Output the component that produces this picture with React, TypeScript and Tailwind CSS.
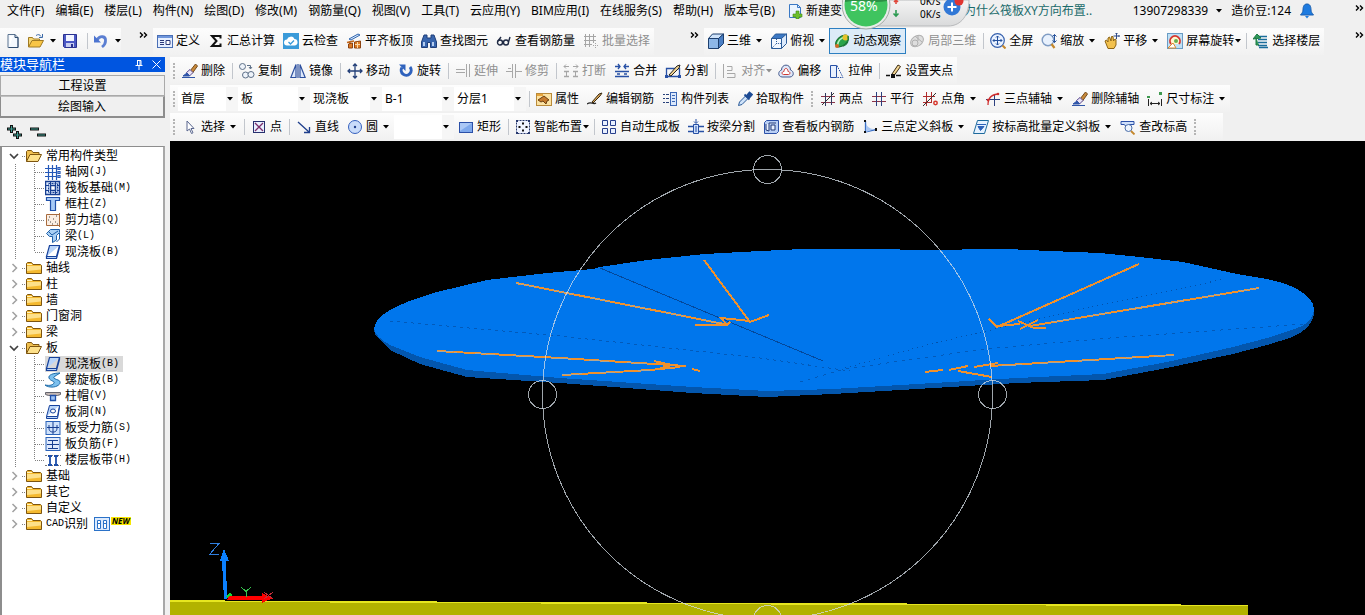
import React from "react";

const icons: Record<string, React.ReactNode> = {
  newFile: (
    <>
      <path d="M3 1.5h7l3 3v10H3z" fill="#f4f8fd" stroke="#5b7390" />
      <path d="M10 1.5v3h3v10H4" fill="none" stroke="#2f4b6e" />
      <path d="M5 12V3h3z" fill="#fff" />
    </>
  ),
  open: (
    <>
      <path d="M.5 14V4.500h4l1 1.500h6v2" fill="#f6d774" stroke="#a07a22" />
      <path d="M.5 14L4 7.500h11.500L12 14z" fill="#f8c545" stroke="#a07a22" />
      <path d="M8 2.500c2-1.500 4-1 5 1M14.500 1v3.500h-3.500" fill="none" stroke="#3c6aa8" />
    </>
  ),
  save: (
    <>
      <path d="M1.500 1.500h13v13h-12l-1-1z" fill="#4b58c4" stroke="#2a3190" />
      <rect x="4" y="2" width="8" height="6" fill="#f2f5ff" />
      <rect x="4" y="10" width="8" height="4" fill="#c7cdf0" />
      <rect x="9" y="11" width="2" height="3" fill="#2a3190" />
    </>
  ),
  undo: (
    <>
      <path d="M4 7C7 2 13 3 12.500 8c0 3-1.500 4.500-3.500 6" fill="none" stroke="#5b7fd2" strokeWidth="2.800" />
      <path d="M1 2.500v7h7z" fill="#4c74d0" />
    </>
  ),
  define: (
    <>
      <rect x=".5" y="2.500" width="15" height="12" fill="#e6efff" stroke="#4a6fb5" />
      <rect x="1" y="3" width="14" height="2" fill="#6f96dc" />
      <path d="M3 7.500h4M3 9.500h4M3 11.500h4" stroke="#2c3a78" />
      <path d="M9 7.500h4v4H9z" fill="#fff" stroke="#2c3a78" />
    </>
  ),
  sigma: <path d="M12.500 5.500V3H4l4.500 5L4 13h8.500v-2.500" fill="none" stroke="#111" strokeWidth="2" />,
  cloud: (
    <>
      <rect x="0" y="0" width="16" height="16" fill="#3a9ad9" />
      <path d="M4 12.500a3 3 0 0 1 0-6 4 4 0 0 1 7.500-.5 3.300 3.300 0 0 1 .5 6.500z" fill="#fff" />
      <path d="M5.500 9l2 2 3.500-3.500" fill="none" stroke="#3a9ad9" strokeWidth="1.300" />
    </>
  ),
  alignTop: (
    <>
      <path d="M3 6l9-5 2 1-9 5z" fill="#dceafc" stroke="#2f66b0" />
      <path d="M1 9.500l7-1.500M4 8v5" stroke="#c0651a" strokeWidth="1.500" />
      <path d="M2.500 15v-4l4-1v5zM8.500 15V9l6-1v7z" fill="#e07c24" stroke="#8c4310" />
      <path d="M9 11.500h5M11.500 9v6" stroke="#fbd9a6" />
    </>
  ),
  find: (
    <>
      <path d="M3 2h3v3h4V2h3l2.500 7v5.500h-6v-5h-3v5h-6V9z" fill="#3865ad" stroke="#1f3f7a" />
      <path d="M3 9v4M12 9v4" stroke="#b5cdf0" strokeWidth="2" />
    </>
  ),
  glasses: (
    <g fill="none" stroke="#1f2a44" strokeWidth="1.400">
      <circle cx="4" cy="9.500" r="2.500" />
      <circle cx="10" cy="9.500" r="2.500" />
      <path d="M6.500 9h1M2 8l3-4M12.500 9L14 4" />
    </g>
  ),
  batch: (
    <g fill="none" stroke="#a6a6a6">
      <path d="M2.500 1v13M6.500 1v13M10.500 1v9M1 3.500h12M1 7.500h12M1 11.500h8" />
      <path d="M10 12.500h5M12.500 10v5" strokeDasharray="1 1" />
    </g>
  ),
  cube: (
    <g stroke="#1d3f6e">
      <path d="M.5 5.500h10v10H.5z" fill="#8db7e8" />
      <path d="M.5 5.500l4-4.500h11l-5 4.500z" fill="#cfe3fa" />
      <path d="M10.500 5.500l5-4.500v9.500l-5 5z" fill="#4b7fc4" />
    </g>
  ),
  topView: (
    <g stroke="#2a5a98">
      <path d="M.5 5.500h10v10H.5z" fill="#f3f8ff" />
      <path d="M.5 5.500l4-4.500h11l-5 4.500z" fill="#3c78c4" />
      <path d="M10.500 5.500l5-4.500v9.500l-5 5z" fill="#dceafc" />
      <path d="M5.500 6v5M1 15l4.500-4.500h5" fill="none" strokeDasharray="1 1" />
    </g>
  ),
  orbit: (
    <>
      <ellipse cx="8" cy="8" rx="7.500" ry="4.500" transform="rotate(-40 8 8)" fill="#2aa44a" stroke="#176b2e" />
      <path d="M3.500 12C4 8 7 5 11 4" stroke="#b7f0c0" fill="none" strokeWidth="1.500" />
      <circle cx="11.500" cy="4.500" r="3" fill="#e6c22b" />
      <path d="M9 13c4-1 6-5 5-10" stroke="#1d7a3a" fill="none" strokeWidth="1.500" />
      <circle cx="3" cy="13" r="2" fill="#d06a24" />
    </>
  ),
  orbitGray: (
    <g fill="#dedede" stroke="#b0b0b0">
      <ellipse cx="8" cy="8" rx="7" ry="5" transform="rotate(-35 8 8)" />
      <circle cx="6" cy="10" r="3" />
      <path d="M6 3l7 6M9 2v6" fill="none" />
    </g>
  ),
  full: (
    <>
      <circle cx="7.500" cy="7.500" r="6.800" fill="#eaf2ff" stroke="#3560ad" strokeWidth="1.200" />
      <path d="M7.500 3v9M3 7.500h9M6 4.500l1.500-1.500L9 4.500M6 10.500L7.500 12 9 10.500M4.500 6L3 7.500 4.500 9M10.500 6L12 7.500 10.500 9" stroke="#24509c" fill="none" />
      <path d="M12.500 12.500l3 3" stroke="#c4872c" strokeWidth="2" />
    </>
  ),
  zoom: (
    <>
      <circle cx="7" cy="7" r="5.800" fill="#e8f1fd" stroke="#7f9cc4" strokeWidth="1.400" />
      <path d="M10.500 11l3 4" stroke="#c4872c" strokeWidth="2.200" />
      <path d="M13.500 1.500v8M11.500 3.500l2-2 2 2M11.500 7.500l2 2 2-2" stroke="#28539c" fill="none" />
    </>
  ),
  hand: (
    <>
      <path d="M1 8l1.500-1L4 9V5l1.500-1L7 8l.5-4.500h1.500L9.500 8 11 6l1 .5V12l-2 3.500H4z" fill="#f2c14e" stroke="#8d6414" />
      <path d="M12.500 0v6M9.500 3h6M11.500 1l1-1 1 1M14.500 2l1 1-1 1" stroke="#2f4b88" fill="none" />
    </>
  ),
  screenRotate: (
    <>
      <rect x=".5" y=".5" width="15" height="15" fill="#bfe0f5" stroke="#6a9cc4" />
      <path d="M4 11A5 5 0 1 1 12 11" fill="#fff6cf" stroke="#d6362c" strokeWidth="1.800" />
      <path d="M1 15l5-5 3 5z" fill="#fff" stroke="#e08a2c" />
      <circle cx="9" cy="8" r="2" fill="#68b050" />
    </>
  ),
  floors: (
    <>
      <path d="M5 3.500h9M5 6.500h9M5 9.500h9M5 12.500h9M6 14.500h9" stroke="#1b6d9b" strokeWidth="1.500" />
      <path d="M0 6l4-5 4 4zM3 4v8h3" fill="#2f9a5b" stroke="#1d7a43" />
    </>
  ),
  brush: (
    <>
      <path d="M8 8l5.500-7L15.500 3l-5 7z" fill="#c98a3b" stroke="#744b1c" />
      <path d="M4.500 9.500l3.500-3 3 3-3.500 3.500z" fill="#e9e4f5" stroke="#5b4a91" />
      <path d="M0 14.500h13M1 13l4-3 2.500 3z" fill="#2f55a8" stroke="#2f55a8" />
    </>
  ),
  copy: (
    <g fill="#eef3fa" stroke="#5d7088">
      <circle cx="3.500" cy="3.500" r="3" />
      <circle cx="6.500" cy="12" r="3" />
      <circle cx="12" cy="11.500" r="3" />
      <path d="M8 2.500h3.500v3M10 4l1.500 2L13 4" fill="none" />
    </g>
  ),
  mirror: (
    <g fill="none" stroke="#2c4f9e" strokeWidth="1.200">
      <path d="M6 1.500v13H.8zM10 1.500v13h5.200z" fill="#dfe9fb" />
      <path d="M8 1v14" />
    </g>
  ),
  move: (
    <path d="M8 1v14M1 8h14M6 3l2-2 2 2M6 13l2 2 2-2M3 6L1 8l2 2M13 6l2 2-2 2" fill="none" stroke="#233f78" strokeWidth="1.300" />
  ),
  rotate: (
    <>
      <path d="M4 4.500a5 5 0 1 0 8-.5" fill="none" stroke="#2f62bd" strokeWidth="3" />
      <path d="M1 1.500h6.500V8z" fill="#2f62bd" />
    </>
  ),
  extend: <path d="M1 6.500h9M1 9.500h9M11.500 1v13M14.500 1v13" fill="none" stroke="#a8a8a8" />,
  trim: <path d="M0 8.500h6M10 8.500h6M6.500 1v14M9.500 1v14M2 5.500h3" fill="none" stroke="#a8a8a8" />,
  breakG: (
    <g fill="none" stroke="#a6a6a6">
      <path d="M1 8.500h5M10 8.500h5M1 13.500h5M10 13.500h5" strokeWidth="1.300" />
      <path d="M1 3.500h5M10 3.500h5M3 1.500l-2 2 2 2M13 1.500l2 2-2 2M3.500 9v4M12.500 9v4" />
    </g>
  ),
  merge: (
    <path d="M1 8.500h14M1 13.500h14M1 3.500h5M4 1l2 2.500-2 2.500M15 3.500h-5M12 1l-2 2.500 2 2.500M3 11h3M10 11h3" fill="none" stroke="#2750a5" strokeWidth="1.300" />
  ),
  split: (
    <>
      <path d="M1.500 5.500h13v8h-13z" fill="none" stroke="#2750a5" strokeWidth="1.300" />
      <path d="M4 12l8-9 3-1-1 3-8 8z" fill="#f0d290" stroke="#222" />
      <path d="M0 12h3v3H0zM13 12h3v3h-3z" fill="#2750a5" />
    </>
  ),
  alignG: <path d="M1.500 1v14M5 3.500h5v4H5M5 10.500h8v4H5" fill="none" stroke="#a8a8a8" />,
  offset: (
    <>
      <path d="M4 14C-.5 13.500 0 8 3.500 7 3.500.5 12.500.5 12.500 7c3.500 1 4 6.500-.5 7z" fill="#dfe7f8" stroke="#43588c" />
      <path d="M5.500 11.500C3 11 4 8.500 6 8.500c0-4 4-4 4 0 2 0 3 2.500.5 3z" fill="#fff" stroke="#cf3a34" />
    </>
  ),
  stretch: (
    <g fill="none" stroke="#2750a5">
      <path d="M1.500 2.500h6v12h-6z" fill="#e8f0fd" />
      <path d="M8 2.500l6 12H8" strokeDasharray="1.500 1" />
    </g>
  ),
  grip: (
    <>
      <path d="M6 11l6-9 2.500 1.500-6 8.500z" fill="#f4d693" stroke="#3a2a10" />
      <path d="M0 12.500h4M10 12.500h5" stroke="#111" strokeWidth="1.300" />
      <path d="M5 11h4v4H5z" fill="#111" />
    </>
  ),
  props: (
    <>
      <rect x=".5" y="2.500" width="15" height="12" fill="#fbe2a2" stroke="#b98a3a" />
      <path d="M1 3h6v2H1z" fill="#e7a53c" />
      <path d="M2 9l6-4 5 4-2 1-1 3-3-3-2 1z" fill="#c57a2c" stroke="#6b3f10" />
    </>
  ),
  editBar: (
    <>
      <path d="M0 13c4-3 6 1 9-1" stroke="#222" fill="none" strokeWidth="1.300" />
      <path d="M5 11l7-8 3-1-2 3-7 7z" fill="#d9a65a" stroke="#3a2a10" />
    </>
  ),
  list: (
    <>
      <path d="M1 3.500h2M4 3.500h3M1 7.500h2M4 7.500h3M1 11.500h2M4 11.500h3" stroke="#27407a" />
      <rect x="8.500" y="1.500" width="6" height="13" fill="#dbe8fb" stroke="#3c67b5" />
      <path d="M10 4.500h3M10 7.500h3M10 10.500h3" stroke="#3c67b5" />
    </>
  ),
  picker: (
    <>
      <path d="M1.500 14.500l1-3.500 6-6 2.500 2.500-6 6z" fill="#cfe3fa" stroke="#2a5a98" />
      <path d="M7.500 3.500l5 5M9.500 5l3-3.500 2.500 2L12 7z" fill="#1d4b94" stroke="#1d4b94" strokeWidth="1.800" />
    </>
  ),
  twoPoint: (
    <>
      <path d="M1 5.500h14M1 11.500h14" stroke="#8c3348" />
      <path d="M5.500 2v13M11.500 1v13" stroke="#333a60" />
      <path d="M2 14L14 2" stroke="#333" />
    </>
  ),
  parallel: (
    <>
      <path d="M1 5.500h14M1 10.500h14" stroke="#8c3348" />
      <path d="M5.500 1v14M10.500 1v14" stroke="#2b3f7e" />
    </>
  ),
  pointAngle: (
    <>
      <path d="M1 5.500h12M1 11.500h9M4.500 1v14M9.500 1v10" stroke="#b02c2c" />
      <path d="M1 15L14 2" stroke="#333" />
      <circle cx="13.500" cy="12" r="1.700" fill="none" stroke="#d6362c" strokeWidth="1.500" />
    </>
  ),
  threeAxis: (
    <>
      <path d="M1 8.500h14M9.500 3v12" stroke="#2b3f7e" />
      <path d="M3 14C3 7 7 3 14 3" fill="none" stroke="#cf2f2f" strokeWidth="1.300" />
      <circle cx="3" cy="9" r="1.300" fill="#cf2f2f" />
      <circle cx="13" cy="3" r="1.300" fill="#cf2f2f" />
    </>
  ),
  dimension: (
    <>
      <path d="M1.500 8v7M14.500 8v7M3 12.500h10M5 11l-2 1.500L5 14M11 11l2 1.500L11 14" fill="none" stroke="#222" />
      <path d="M0 5h3v2H0zM12 1h3v3h-3z" fill="#3f9a50" />
    </>
  ),
  cursor: <path d="M5 2v10l2.500-2 2 4.500 1.500-.700-2-4.300h3z" fill="#fff" stroke="#5a678f" />,
  point: (
    <>
      <rect x="2.500" y="2.500" width="11" height="11" fill="#eaf0ff" stroke="#27306e" />
      <path d="M4 4l8 8M12 4l-8 8" stroke="#7b2d6a" strokeWidth="1.300" />
    </>
  ),
  line: <path d="M2 3l11 10M13.500 8v5.500H8" stroke="#1f3f8c" strokeWidth="1.300" fill="none" />,
  circle: (
    <>
      <circle cx="8" cy="8" r="6.500" fill="#c9dcfa" stroke="#3560bd" />
      <circle cx="8" cy="8" r="1.200" fill="#1f3f8c" />
    </>
  ),
  rect: (
    <>
      <rect x="1.500" y="3.500" width="13" height="10" fill="#7fa9ec" stroke="#2b50a8" />
      <path d="M2 4h12L2 12z" fill="#abc8f6" />
    </>
  ),
  smart: (
    <>
      <rect x="1.500" y="1.500" width="13" height="13" fill="#f0f4ff" stroke="#27386e" strokeDasharray="2 1" />
      <path d="M8 3v3M8 10v3M3 8h3M10 8h3M7 4.500h2M7 11.500h2M4.500 7v2M11.500 7v2" stroke="#111" />
      <path d="M1 1h2v2H1zM13 1h2v2h-2zM1 13h2v2H1zM13 13h2v2h-2z" fill="#27386e" />
    </>
  ),
  autoSlab: (
    <path
      d="M1.500 1.500h5v5h-5zM9.500 1.500h5v5h-5zM1.500 9.500h5v5h-5zM9.500 9.500h5v5h-5z"
      fill="#e8f0ff"
      stroke="#273f8c"
    />
  ),
  beamSplit: (
    <>
      <path d="M0 7.500h16M0 12.500h16" stroke="#2750a5" strokeWidth="1.300" />
      <path d="M5.500 5.500h5v9h-5z" fill="#cfe0fb" stroke="#2750a5" />
      <path d="M8 0v4M6 2.500l2 2 2-2M8 7v6" stroke="#2750a5" fill="none" />
    </>
  ),
  viewBar: (
    <>
      <path d="M1.500 3.500l2-2h12v11l-2 2h-12z" fill="#b9cff5" stroke="#2b50a8" />
      <path d="M3 5v6l3 1V4h7M8 6h4v5H8z" fill="#e9f1ff" stroke="#233a78" />
    </>
  ),
  threeSlope: (
    <>
      <path d="M3.500 2v11L14 10.500" fill="none" stroke="#3a6fc4" strokeWidth="1.300" />
      <path d="M4 4c1 4 4 6 9 6l-9 3z" fill="#a9c6f2" />
      <path d="M2 1h2v2H2zM2 12h2v2H2zM13 9h2v3h-2z" fill="#111" />
    </>
  ),
  batchSlope: (
    <>
      <path d="M4.500 1.500h11l-4 13H.5z" fill="#e6f2ff" stroke="#1d6a9c" />
      <path d="M5 7.500h6l-3.500 4z" fill="#2c62b8" stroke="#2c62b8" />
      <path d="M4 5.500h9" stroke="#2c62b8" />
    </>
  ),
  checkLevel: (
    <>
      <path d="M1 2.500h13v3H9l-1 3-4-3H1z" fill="#cfe0fb" stroke="#2b50a8" />
      <circle cx="8.500" cy="9" r="3.500" fill="#eef5ff" stroke="#4b6ea8" />
      <path d="M11 12l3.500 3.500" stroke="#c4872c" strokeWidth="1.800" />
    </>
  ),
  newChange: (
    <>
      <path d="M2.500 1.500h8l3 3v10h-11z" fill="#eaf4ff" stroke="#3a78c4" />
      <path d="M10.500 1.500v3h3" fill="none" stroke="#3a78c4" />
      <path d="M9 8h3v3h3v3h-3v2H9v-2H6v-3h3z" fill="#6cbf2b" stroke="#3f8a14" strokeWidth=".6" />
    </>
  ),
  bell: (
    <>
      <path d="M8 1c-3 0-4 2.500-4 6 0 2-1 3-2.500 5h13C13 10 12 9 12 7c0-3.500-1-6-4-6z" fill="#1e7be0" stroke="#1a5fb0" />
      <path d="M6 13h4l-2 2.500z" fill="#1e7be0" />
    </>
  ),
  folder: (
    <>
      <path d="M.5 13.500v-10l1-1h4l1.500 2h7.500l1 1v8z" fill="#f4b92f" stroke="#7d5510" />
      <path d="M1 6h14v3.500L1 11z" fill="#fde08a" />
      <path d="M1 4.500h5" stroke="#fff3c0" />
    </>
  ),
  folderOpen: (
    <>
      <path d="M.5 13.500v-10l1-1h4l1.500 2h6v3" fill="#f0c050" stroke="#7d5510" />
      <path d="M.5 13.500L4 6.500h11.500L12 13.500z" fill="#fde08a" stroke="#7d5510" />
    </>
  ),
  axisNet: (
    <path d="M0 4.500h12M0 8.500h12M0 12.500h12M3.500 1v15M7.500 1v15M11.500 1v15M13 3.500h2v2h-2zM13 7.500h2v2h-2zM13 11.500h2v2h-2z" fill="none" stroke="#2458b8" strokeWidth="1.200" />
  ),
  raft: (
    <g fill="none" stroke="#173f92">
      <rect x=".5" y="1.500" width="14" height="13" fill="#dbe8fb" strokeWidth="1.500" />
      <path d="M5.500 5.500h5v5h-5z" fill="#fff" strokeWidth="1.500" />
      <path d="M3.500 3.500h9v9h-9z" strokeDasharray="2 1" />
      <path d="M5.500 2v3M10.500 2v3M5.500 11v3M10.500 11v3M1 5.500h3M1 10.500h3M12 5.500h3M12 10.500h3" />
    </g>
  ),
  column: <path d="M1.500 1.500h13v3h-4v10h-5v-10h-4z" fill="#a8caf6" stroke="#1f4fa8" strokeWidth="1.200" />,
  shearWall: (
    <>
      <path d="M1.500 2.500h13v11h-13z" fill="#fbeee2" stroke="#a86a3c" />
      <path d="M4 5h1M8 7h1M11 4h1M5 10h1M10 10h1M7 12h1M3 8h1M12 12h1" stroke="#444" />
      <path d="M14.500 1v14" stroke="#a86a3c" />
    </>
  ),
  beam: (
    <>
      <path d="M1.500 5.500l4-4h9v3l-3 3V12l-4 2.500v-6h-3z" fill="#a9d0f4" stroke="#1f5fa8" />
      <path d="M4 4l3 3 6-4M14.500 5v6l-3 3" fill="none" stroke="#1f5fa8" />
    </>
  ),
  slab: <path d="M4.500 1.500h10l-3 11h-10zM1.500 12.500v2h10l3-11v-2" fill="#b9d5fa" stroke="#17429c" strokeWidth="1.200" />,
  spiral: (
    <path d="M15 1C8 1 3 3 4 6s6 3 5 5-4 3-9 2c2 2 8 3 12 1s4-5 1-6-5-2-4-3 3-2 6-4z" fill="#7cc0ee" stroke="#1d6aa8" />
  ),
  cap: (
    <>
      <path d="M.5 4.500h15v2l-3 1h-9l-3-1z" fill="#c4b8b4" stroke="#65656e" />
      <path d="M5.500 7.500h5v5h-5z" fill="#9cc2f4" stroke="#1f4fa8" strokeWidth="1.300" />
    </>
  ),
  hole: (
    <>
      <path d="M4.500 1.500h10l-2 11h-11zM1.500 12.500v2h11l2-11v-2" fill="#b9d5fa" stroke="#17429c" />
      <ellipse cx="8" cy="7" rx="2.500" ry="2" fill="#fff" stroke="#17429c" />
    </>
  ),
  mainBar: (
    <>
      <rect x="1" y="1.500" width="14" height="13" fill="#cfe2fb" stroke="#2b62b8" />
      <path d="M8 2v12M2 7.500h12M4 5v3c0 4 3 4 4 4M12 5v3c0 4-3 4-4 4" fill="none" stroke="#173f92" />
    </>
  ),
  negBar: (
    <>
      <rect x="1" y="1.500" width="14" height="13" fill="#dfeafd" stroke="#2b62b8" />
      <path d="M7.500 4v9M2 8.500h12M3 4.500h10M3 12.500h10" fill="none" stroke="#173f92" />
    </>
  ),
  band: (
    <>
      <path d="M0 3.500h16M0 13.500h16" stroke="#777" strokeDasharray="2 1" />
      <path d="M5 4v9M11 4v9M3 4h4M9 4h4M3 13h4M9 13h4" stroke="#1f4fa8" strokeWidth="1.800" />
    </>
  ),
  cad: (
    <>
      <rect x=".5" y="1.500" width="15" height="13" fill="#dceafd" stroke="#2b72c8" />
      <path d="M3.500 4.500h3v8h-3zM9.500 4.500h3v8h-3zM3 7.500h4M9 7.500h4" fill="#fff" stroke="#2b72c8" />
    </>
  ),
};

function Icon({ name }: { name: string }) {
  return (
    <svg viewBox="0 0 16 16" className="size-4 shrink-0" aria-hidden="true">
      {icons[name]}
    </svg>
  );
}

function Arrow() {
  return (
    <svg viewBox="0 0 6 4" className="h-1 w-1.5 shrink-0 fill-current" aria-hidden="true">
      <path d="M0 0h6L3 3.600z" />
    </svg>
  );
}

type ToolProps = {
  icon: string;
  label: string;
  menu?: "near" | "split";
  off?: boolean;
  active?: boolean;
};

function Tool({ icon, label, menu, off, active }: ToolProps) {
  return (
    <button
      type="button"
      disabled={off}
      aria-pressed={active}
      className={
        active
          ? "flex h-6 shrink-0 items-center gap-[3px] bg-[#dcebf8] px-1 whitespace-nowrap outline outline-[#2d7fc1]"
          : off
            ? "flex h-6 shrink-0 items-center gap-[3px] px-1 whitespace-nowrap text-[#8f8f8f]"
            : "flex h-6 shrink-0 items-center gap-[3px] px-1 whitespace-nowrap"
      }
    >
      <Icon name={icon} />
      <span>{label}</span>
      {menu === "near" && (
        <span className="-mr-0.5 -ml-0.5">
          <Arrow />
        </span>
      )}
      {menu === "split" && (
        <span className="mr-px ml-0.5">
          <Arrow />
        </span>
      )}
    </button>
  );
}

function Sep() {
  return (
    <span className="flex w-1.5 shrink-0 justify-center">
      <span className="h-4 w-px bg-[#c2c6cc]" />
    </span>
  );
}

function Grip() {
  return (
    <span className="flex w-2 shrink-0 justify-center">
      <span className="h-4 border-l-2 border-dotted border-[#b5b5b5]" />
    </span>
  );
}

function Combo({ label, options, wide }: { label: string; options: string[]; wide?: boolean }) {
  return (
    <label className={wide ? "relative flex w-[72px] shrink-0" : "relative flex w-[60px] shrink-0"}>
      <select aria-label={label} className="h-6 w-full appearance-none bg-white pr-4 pl-[3px]">
        {options.map((o) => (
          <option key={o}>{o}</option>
        ))}
      </select>
      <span className="pointer-events-none absolute inset-y-0 right-0 flex w-3 items-center bg-[#f6f6f6] pl-px">
        <Arrow />
      </span>
    </label>
  );
}

function More() {
  return (
    <button type="button" aria-label="更多" className="flex h-4 w-3 shrink-0 items-center justify-center self-start">
      <svg viewBox="0 0 9 6" className="h-1.5 w-[9px] fill-none stroke-black" strokeWidth="1.400">
        <path d="M1 .5L3.500 3 1 5.500M5 .5L7.500 3 5 5.500" />
      </svg>
    </button>
  );
}

function Strip({ children }: { children: React.ReactNode }) {
  return (
    <div className="flex h-[27px] shrink-0 items-center bg-linear-to-b from-[#fdfdfd] to-[#f1f1f1]">{children}</div>
  );
}

const menus = [
  "文件(F)", "编辑(E)", "楼层(L)", "构件(N)", "绘图(D)", "修改(M)", "钢筋量(Q)", "视图(V)", "工具(T)",
  "云应用(Y)", "BIM应用(I)", "在线服务(S)", "帮助(H)", "版本号(B)",
];

function SpeedWidget() {
  return (
    <div className="relative z-10 h-full w-[122px] shrink-0">
      <svg viewBox="0 0 130 32" className="absolute top-0 left-0 h-8 w-[130px]" aria-hidden="true">
        <defs>
          <linearGradient id="panel" x1="0" y1="0" x2="0" y2="1">
            <stop offset="0" stopColor="#f4f4f4" />
            <stop offset="1" stopColor="#d9dadb" />
          </linearGradient>
        </defs>
        <path d="M24 0H127C127 14 120 26 106 26H24z" fill="url(#panel)" stroke="#b7b9bb" />
        <circle cx="24" cy="5" r="24" fill="#e9ecea" stroke="#a5aaa6" />
        <circle cx="24" cy="5" r="21.500" fill="#3fc45f" />
        <path d="M3 0h42v1c-14 3-28-2-42 1z" fill="#2c8f45" />
        <path d="M54 0v4M52 2l2-2 2 2" stroke="#e0483c" strokeWidth="1.600" fill="none" />
        <path d="M54 10v6M51.500 13.500L54 16l2.500-2.500" stroke="#2d9a52" strokeWidth="1.600" fill="none" />
        <circle cx="110" cy="7" r="8.500" fill="#3178d6" />
        <path d="M110 2.500v9M105.500 7h9" stroke="#fff" strokeWidth="2" />
        <circle cx="117" cy="1" r="4.500" fill="#e03530" />
      </svg>
      <span className="absolute -top-1 left-2 text-[14px] leading-5 text-white">58%</span>
      <span className="absolute -top-1.5 left-[78px] text-[10px] leading-[14px]">0K/s</span>
      <span className="absolute top-[7px] left-[78px] text-[10px] leading-[14px]">0K/s</span>
    </div>
  );
}

type Leaf = { icon: string; name: string; key: string; active?: boolean };
type Branch = { name: string; children?: Leaf[]; isNew?: boolean };

const tree: Branch[] = [
  {
    name: "常用构件类型",
    children: [
      { icon: "axisNet", name: "轴网", key: "(J)" },
      { icon: "raft", name: "筏板基础", key: "(M)" },
      { icon: "column", name: "框柱", key: "(Z)" },
      { icon: "shearWall", name: "剪力墙", key: "(Q)" },
      { icon: "beam", name: "梁", key: "(L)" },
      { icon: "slab", name: "现浇板", key: "(B)" },
    ],
  },
  { name: "轴线" },
  { name: "柱" },
  { name: "墙" },
  { name: "门窗洞" },
  { name: "梁" },
  {
    name: "板",
    children: [
      { icon: "slab", name: "现浇板", key: "(B)", active: true },
      { icon: "spiral", name: "螺旋板", key: "(B)" },
      { icon: "cap", name: "柱帽", key: "(V)" },
      { icon: "hole", name: "板洞", key: "(N)" },
      { icon: "mainBar", name: "板受力筋", key: "(S)" },
      { icon: "negBar", name: "板负筋", key: "(F)" },
      { icon: "band", name: "楼层板带", key: "(H)" },
    ],
  },
  { name: "基础" },
  { name: "其它" },
  { name: "自定义" },
  { name: "识别", isNew: true },
];

const mono = "font-['Liberation_Mono',monospace] text-[10px]";

function Tree() {
  return (
    <ul className="grow border-x-2 border-t border-[#8d8d8d] border-r-[#a8a8a8] bg-white pt-px leading-4">
      {tree.map((b) => (
        <li key={b.name}>
          <button type="button" aria-expanded={!!b.children} className="flex h-4 items-center pl-[7px]">
            <svg viewBox="0 0 17 16" className="h-4 w-[17px] shrink-0 fill-none" aria-hidden="true">
              {b.children ? (
                <path d="M1 6l4 4 4-4" stroke="#404040" strokeWidth="1.700" />
              ) : (
                <path d="M3.500 4l4 4-4 4" stroke="#a0a0a0" strokeWidth="1.500" />
              )}
              <path d="M13 8.500h4" stroke="#808080" strokeDasharray="1 1" />
            </svg>
            <Icon name={b.children ? "folderOpen" : "folder"} />
            <span className="ml-1 flex items-center">
              {b.isNew && <span className={mono}>CAD</span>}
              {b.name}
            </span>
            {b.isNew && (
              <span className="ml-1.5 flex items-center">
                <Icon name="cad" />
                <span className="mb-1.5 ml-px bg-[#f7e600] px-px text-[8px] leading-2 font-bold italic">NEW</span>
              </span>
            )}
          </button>
          {b.children && (
            <ul>
              {b.children.map((c, i) => (
                <li key={c.name}>
                  <button type="button" aria-current={c.active} className="flex h-4 items-center pl-[13px]">
                    <svg viewBox="0 0 30 16" className="h-4 w-[30px] shrink-0 fill-none" aria-hidden="true">
                      <g stroke="#808080" strokeDasharray="1 1">
                        <path d="M.5 0v16" />
                        <path d={i === b.children!.length - 1 ? "M19.500 0v8" : "M19.500 0v16"} />
                        <path d="M20 8.500h9" />
                      </g>
                    </svg>
                    <span className={c.active ? "flex h-4 items-center bg-[#d9d9d9] pr-1" : "flex h-4 items-center pr-1"}>
                      <Icon name={c.icon} />
                      <span className="ml-1 whitespace-nowrap">{c.name}</span>
                      <span className={mono}>{c.key}</span>
                    </span>
                  </button>
                </li>
              ))}
            </ul>
          )}
        </li>
      ))}
    </ul>
  );
}

function Sidebar() {
  return (
    <aside className="flex w-[165px] shrink-0 flex-col">
      <header className="flex h-[15px] items-center bg-[#0055e0] text-white">
        <h2 className="grow text-[13px] leading-[15px]">模块导航栏</h2>
        <button type="button" aria-label="固定" className="mr-2">
          <svg viewBox="0 0 10 10" className="size-2.5 fill-none stroke-white">
            <path d="M3 .5h4v5M3.500.5v5M6 .5v5M1.500 5.500h7M5 6v4" />
          </svg>
        </button>
        <button type="button" aria-label="关闭" className="mr-1">
          <svg viewBox="0 0 9 9" className="size-[9px] fill-none stroke-white">
            <path d="M.5.5l8 8M8.500.5l-8 8" />
          </svg>
        </button>
      </header>
      <button type="button" className="mt-[3px] h-[21px] border border-[#a9a9a9] bg-[#f0f0f0] leading-[18px]">
        工程设置
      </button>
      <button type="button" className="h-[22px] border border-r-2 border-b-2 border-[#8d8d8d] border-t-[#c0c0c0] bg-[#f0f0f0] leading-[18px]">
        绘图输入
      </button>
      <div className="flex h-7 items-center gap-1.5 pl-1.5">
        <button type="button" aria-label="全部展开">
          <svg viewBox="0 0 17 16" className="h-4 w-[17px]">
            <path d="M5.500 1v8M1 5h9M11.500 7v8M7 11h9" stroke="#111" strokeWidth="3" />
            <path d="M5.500 2v6M2 5h7M11.500 8v6M8 11h7" stroke="#3f9c90" />
          </svg>
        </button>
        <button type="button" aria-label="全部折叠">
          <svg viewBox="0 0 17 16" className="h-4 w-[17px]">
            <path d="M1 5h9M8 11h9" stroke="#111" strokeWidth="3" />
            <path d="M2 5h7M9 11h7" stroke="#3f9c90" />
          </svg>
        </button>
      </div>
      <Tree />
    </aside>
  );
}

function Scene() {
  return (
    <main className="min-h-0 grow overflow-hidden bg-black">
      <svg
        viewBox="170 141 1195 474"
        preserveAspectRatio="xMinYMin slice"
        shapeRendering="crispEdges"
        className="h-full w-full"
        role="img"
        aria-label="现浇板三维视图"
      >
        <path
          d="M374 328L375 335L390 350L420 364L467 377L560 383L693 393L767 397L833 394L917 389L1017 383L1103 380L1167 368L1233 354L1267 345L1290 338Q1314 328 1314 311L1100 300L500 300Z"
          fill="#0356ad"
        />
        <path
          d="M374 328C376 317 387 311 400 305Q416 298 437 292L487 280L547 273L593 269L600 267L647 260L705 254L760 251L803 249H883L917 250L1007 249L1050 251L1100 253L1140 257L1183 262L1237 274L1267 279Q1286 283 1297 289C1310 296 1314 303 1314 310C1313 320 1306 325 1295 329L1267 338L1233 347L1167 362L1103 374L1017 378L917 384L833 389L767 391L693 387L560 378L467 370L420 357L390 345Q375 337 374 328Z"
          fill="#0076ec"
        />
        <g fill="none" stroke="#04489a">
          <path d="M600 268L823 361" />
          <path d="M390 321L560 336L760 358L850 371" strokeDasharray="3 4" opacity=".6" />
          <path d="M800 382L845 369L985 349L1110 338L1305 324" strokeDasharray="3 5" opacity=".6" />
          <path d="M845 368L930 344L1100 305L1225 279" strokeDasharray="1 4" opacity=".8" />
        </g>
        <g fill="none" stroke="#f0912c" strokeWidth="2">
          <path d="M516 283L724 324M695 325H727L730 322M727 325L721 318L750 321M704 260L750 322L769 315" />
          <path d="M437 351L560 358L686 366M562 375L650 370L680 367M654 361L672 365M658 369L672 365M692 369L700 371" />
          <path d="M1139 264L997 327L989 319M1259 288L1030 326M997 326L1020 324M1018 321L1034 328H1046M1020 329L1038 320" />
          <path d="M1174 355L990 366M925 372L943 370M949 370L968 366M958 371L992 377M974 367L998 363" />
        </g>
        <path
          d="M516 283L724 324M437 351L650 364M1259 288L1040 324M1174 355L1000 366M562 375L650 370"
          fill="none"
          stroke="#a9a8a0"
          strokeDasharray="20 18"
          strokeOpacity=".9"
        />
        <path d="M170 601L700 603L1248 605V615H170z" fill="#b2b200" />
        <path d="M170 601L700 603.500L1248 605.500" stroke="#e6e620" strokeWidth="1.500" fill="none" />
        <g fill="none" stroke="#d4dde6" strokeWidth="1" strokeOpacity=".75">
          <circle cx="767.500" cy="394.500" r="225" />
          <circle cx="767.500" cy="169.500" r="14" />
          <circle cx="542.500" cy="394.500" r="14" />
          <circle cx="992.500" cy="394.500" r="14" />
          <circle cx="767.500" cy="619.500" r="14" />
        </g>
        <path d="M224 599L222 561H220L224 549L229 561H226L227 599z" fill="#0b80ff" />
        <path d="M226 596l4-4 2 3-4 4z" fill="#12d63a" />
        <path d="M229 596h33v-3l11 5-11 5v-3h-35z" fill="#f00" />
        <g fill="none">
          <path d="M210 543.500h9l-9 10.500h9" stroke="#2f7fe0" />
          <path d="M241 587l5 4.500 5-4.500M246 591.500v5" stroke="#35c24c" />
          <path d="M264 592l9 7M273 592l-9 7" stroke="#c2303a" />
        </g>
      </svg>
    </main>
  );
}

export default function App() {
  return (
    <div className="flex h-screen min-h-[480px] flex-col overflow-hidden bg-[#f0f0f0] font-['Noto_Sans','Noto_Sans_CJK_SC',sans-serif] text-[12px] leading-4 text-black">
      <nav className="flex h-[22px] shrink-0 items-center">
        <div className="flex gap-[11px] pl-[7px]">
          {menus.map((m) => (
            <button key={m} type="button" className="whitespace-nowrap">
              {m}
            </button>
          ))}
        </div>
        <button type="button" className="ml-3 flex shrink-0 items-center gap-[3px] whitespace-nowrap">
          <Icon name="newChange" />
          新建变
        </button>
        <SpeedWidget />
        <a href="#help" className="shrink-0 whitespace-nowrap text-[#1a6b6b]">
          为什么筏板XY方向布置..
        </a>
        <button type="button" className="ml-auto flex shrink-0 items-center gap-2 whitespace-nowrap">
          13907298339
          <Arrow />
        </button>
        <span className="ml-[9px] shrink-0 whitespace-nowrap">造价豆:124</span>
        <button type="button" aria-label="通知" className="mr-[38px] ml-2">
          <Icon name="bell" />
        </button>
        <More />
      </nav>

      <div className="mt-[5px] flex shrink-0 items-center">
        <Strip>
          <button type="button" aria-label="新建" className="ml-1 px-px">
            <Icon name="newFile" />
          </button>
          <button type="button" aria-label="打开" className="ml-1.5 flex items-center gap-1.5">
            <Icon name="open" />
            <Arrow />
          </button>
          <button type="button" aria-label="保存" className="mr-1.5 ml-1.5">
            <Icon name="save" />
          </button>
          <Sep />
          <button type="button" aria-label="撤销" className="ml-[3px] flex items-center gap-1.5">
            <Icon name="undo" />
            <Arrow />
          </button>
        </Strip>
        <div className="ml-4 flex h-7">
          <More />
        </div>
        <div className="ml-1">
          <Strip>
            <Tool icon="define" label="定义" />
            <Tool icon="sigma" label="汇总计算" />
            <Tool icon="cloud" label="云检查" />
            <Tool icon="alignTop" label="平齐板顶" />
            <Tool icon="find" label="查找图元" />
            <Tool icon="glasses" label="查看钢筋量" />
            <Tool icon="batch" label="批量选择" off />
          </Strip>
        </div>
        <div className="ml-[34px] flex h-7">
          <More />
        </div>
        <div className="ml-1">
          <Strip>
            <Tool icon="cube" label="三维" menu="split" />
            <Tool icon="topView" label="俯视" menu="split" />
            <Tool icon="orbit" label="动态观察" active />
            <Tool icon="orbitGray" label="局部三维" off />
            <Sep />
            <Tool icon="full" label="全屏" />
            <Tool icon="zoom" label="缩放" menu="split" />
            <Tool icon="hand" label="平移" menu="split" />
            <Tool icon="screenRotate" label="屏幕旋转" menu="near" />
            <Sep />
            <Tool icon="floors" label="选择楼层" />
          </Strip>
        </div>
        <div className="ml-auto flex h-7">
          <More />
        </div>
      </div>

      <div className="mt-0.5 flex min-h-0 grow gap-[5px]">
        <Sidebar />
        <div className="flex min-w-0 grow flex-col">
          <div className="flex flex-col items-start gap-px pb-px">
            <Strip>
              <Grip />
              <Tool icon="brush" label="删除" />
              <Sep />
              <Tool icon="copy" label="复制" />
              <Tool icon="mirror" label="镜像" />
              <Sep />
              <Tool icon="move" label="移动" />
              <Tool icon="rotate" label="旋转" />
              <Sep />
              <Tool icon="extend" label="延伸" off />
              <Tool icon="trim" label="修剪" off />
              <Sep />
              <Tool icon="breakG" label="打断" off />
              <Tool icon="merge" label="合并" />
              <Tool icon="split" label="分割" />
              <Sep />
              <Tool icon="alignG" label="对齐" menu="near" off />
              <Tool icon="offset" label="偏移" />
              <Tool icon="stretch" label="拉伸" />
              <Sep />
              <Tool icon="grip" label="设置夹点" />
            </Strip>
            <Strip>
              <Grip />
              <Combo label="楼层" options={["首层"]} />
              <Combo label="构件类别" options={["板"]} wide />
              <Combo label="构件类型" options={["现浇板"]} wide />
              <Combo label="构件" options={["B-1"]} wide />
              <Combo label="分层" options={["分层1"]} wide />
              <Sep />
              <Tool icon="props" label="属性" />
              <Tool icon="editBar" label="编辑钢筋" />
              <Tool icon="list" label="构件列表" />
              <Tool icon="picker" label="拾取构件" />
              <Grip />
              <Tool icon="twoPoint" label="两点" />
              <Tool icon="parallel" label="平行" />
              <Tool icon="pointAngle" label="点角" menu="split" />
              <Tool icon="threeAxis" label="三点辅轴" menu="split" />
              <Tool icon="brush" label="删除辅轴" />
              <Tool icon="dimension" label="尺寸标注" menu="split" />
            </Strip>
            <Strip>
              <Grip />
              <Tool icon="cursor" label="选择" menu="split" />
              <Sep />
              <Tool icon="point" label="点" />
              <Sep />
              <Tool icon="line" label="直线" />
              <Tool icon="circle" label="圆" menu="split" />
              <Combo label="画法" options={[""]} />
              <Tool icon="rect" label="矩形" />
              <Sep />
              <Tool icon="smart" label="智能布置" menu="near" />
              <Sep />
              <Tool icon="autoSlab" label="自动生成板" />
              <Tool icon="beamSplit" label="按梁分割" />
              <Tool icon="viewBar" label="查看板内钢筋" />
              <Tool icon="threeSlope" label="三点定义斜板" menu="split" />
              <Tool icon="batchSlope" label="按标高批量定义斜板" menu="split" />
              <Tool icon="checkLevel" label="查改标高" />
              <Grip />
              <span className="w-6" />
            </Strip>
          </div>
          <Scene />
        </div>
      </div>
    </div>
  );
}
